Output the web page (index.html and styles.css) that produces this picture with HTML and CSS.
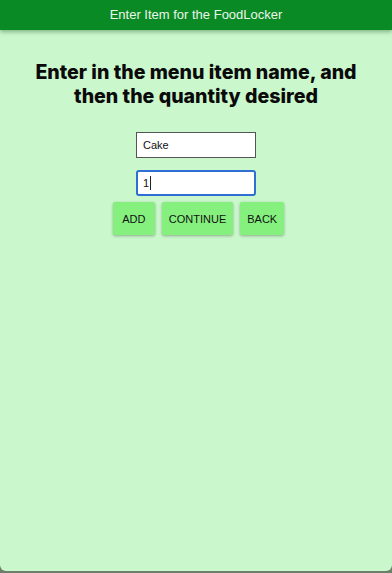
FILE: index.html
```html
<!DOCTYPE html>
<html lang="en">
<head>
  <meta charset="UTF-8" />
  <meta name="viewport" content="width=device-width, initial-scale=1.0"/>
  <title>FoodLocker</title>
  <link rel="stylesheet" href="styles.css">
</head>
<body>
  <div class="screen">
    <!-- Top bar -->
    <header class="topbar">Enter Item for the FoodLocker</header>

    <main class="content">
      <h1>Enter in the menu item name, and then the quantity desired</h1>

      <input type="text" class="field" value="Cake" />
      <div class="field-wrap">
        <input type="text" class="field focused" value="1" />
        <span class="caret"></span>
      </div>

      <div class="actions">
        <button class="btn btn-add">Add</button>
        <button class="btn">Continue</button>
        <button class="btn">Back</button>
      </div>
    </main>
  </div>
</body>
</html>
```

FILE: styles.css
```css
html, body {
  margin: 0;
  padding: 0;
  background: #6b7f6b;
}

.screen {
  height: 571px;
  background: #caf7cc;
  border-radius: 0 0 6px 6px;
  font-family: "Liberation Sans", Arial, sans-serif;
  overflow: hidden;
}

.topbar {
  height: 30px;
  line-height: 30px;
  background: #0a8a25;
  color: #eaf6ea;
  font-size: 13px;
  text-align: center;
  box-shadow: 0 2px 4px rgba(0, 60, 0, 0.35);
  position: relative;
}

.content {
  display: flex;
  flex-direction: column;
  align-items: center;
  padding-top: 30px;
}

h1 {
  margin: 0 0 24px;
  width: 340px;
  font-family: Inter, "Liberation Sans", sans-serif;
  font-size: 19.6px;
  line-height: 24px;
  font-weight: 800;
  color: #0a0a0a;
  text-align: center;
}

.field {
  box-sizing: border-box;
  width: 120px;
  height: 26px;
  margin: 0 0 12px;
  padding: 0 6px;
  border: 1px solid #555;
  border-radius: 0;
  background: #fff;
  font-family: "Liberation Sans", Arial, sans-serif;
  font-size: 11px;
  color: #111;
  outline: none;
}

.field-wrap {
  position: relative;
  height: 26px;
  margin-bottom: 6px;
}

.field.focused {
  display: block;
  margin: 0;
  border: 2px solid #2d6fd2;
  border-radius: 3px;
  padding: 0 5px;
}

.caret {
  position: absolute;
  left: 14px;
  top: 6px;
  width: 1px;
  height: 14px;
  background: #222;
}

.actions {
  display: flex;
  gap: 7px;
  margin-left: 5px;
}

.btn {
  height: 33px;
  padding: 0 7px;
  border: none;
  border-radius: 2px;
  background: #86f07f;
  color: #111;
  font-family: "Liberation Sans", Arial, sans-serif;
  font-size: 11px;
  text-transform: uppercase;
  box-shadow: 0 1px 3px rgba(0, 0, 0, 0.3);
  cursor: pointer;
}

.btn-add {
  min-width: 42px;
}
```
